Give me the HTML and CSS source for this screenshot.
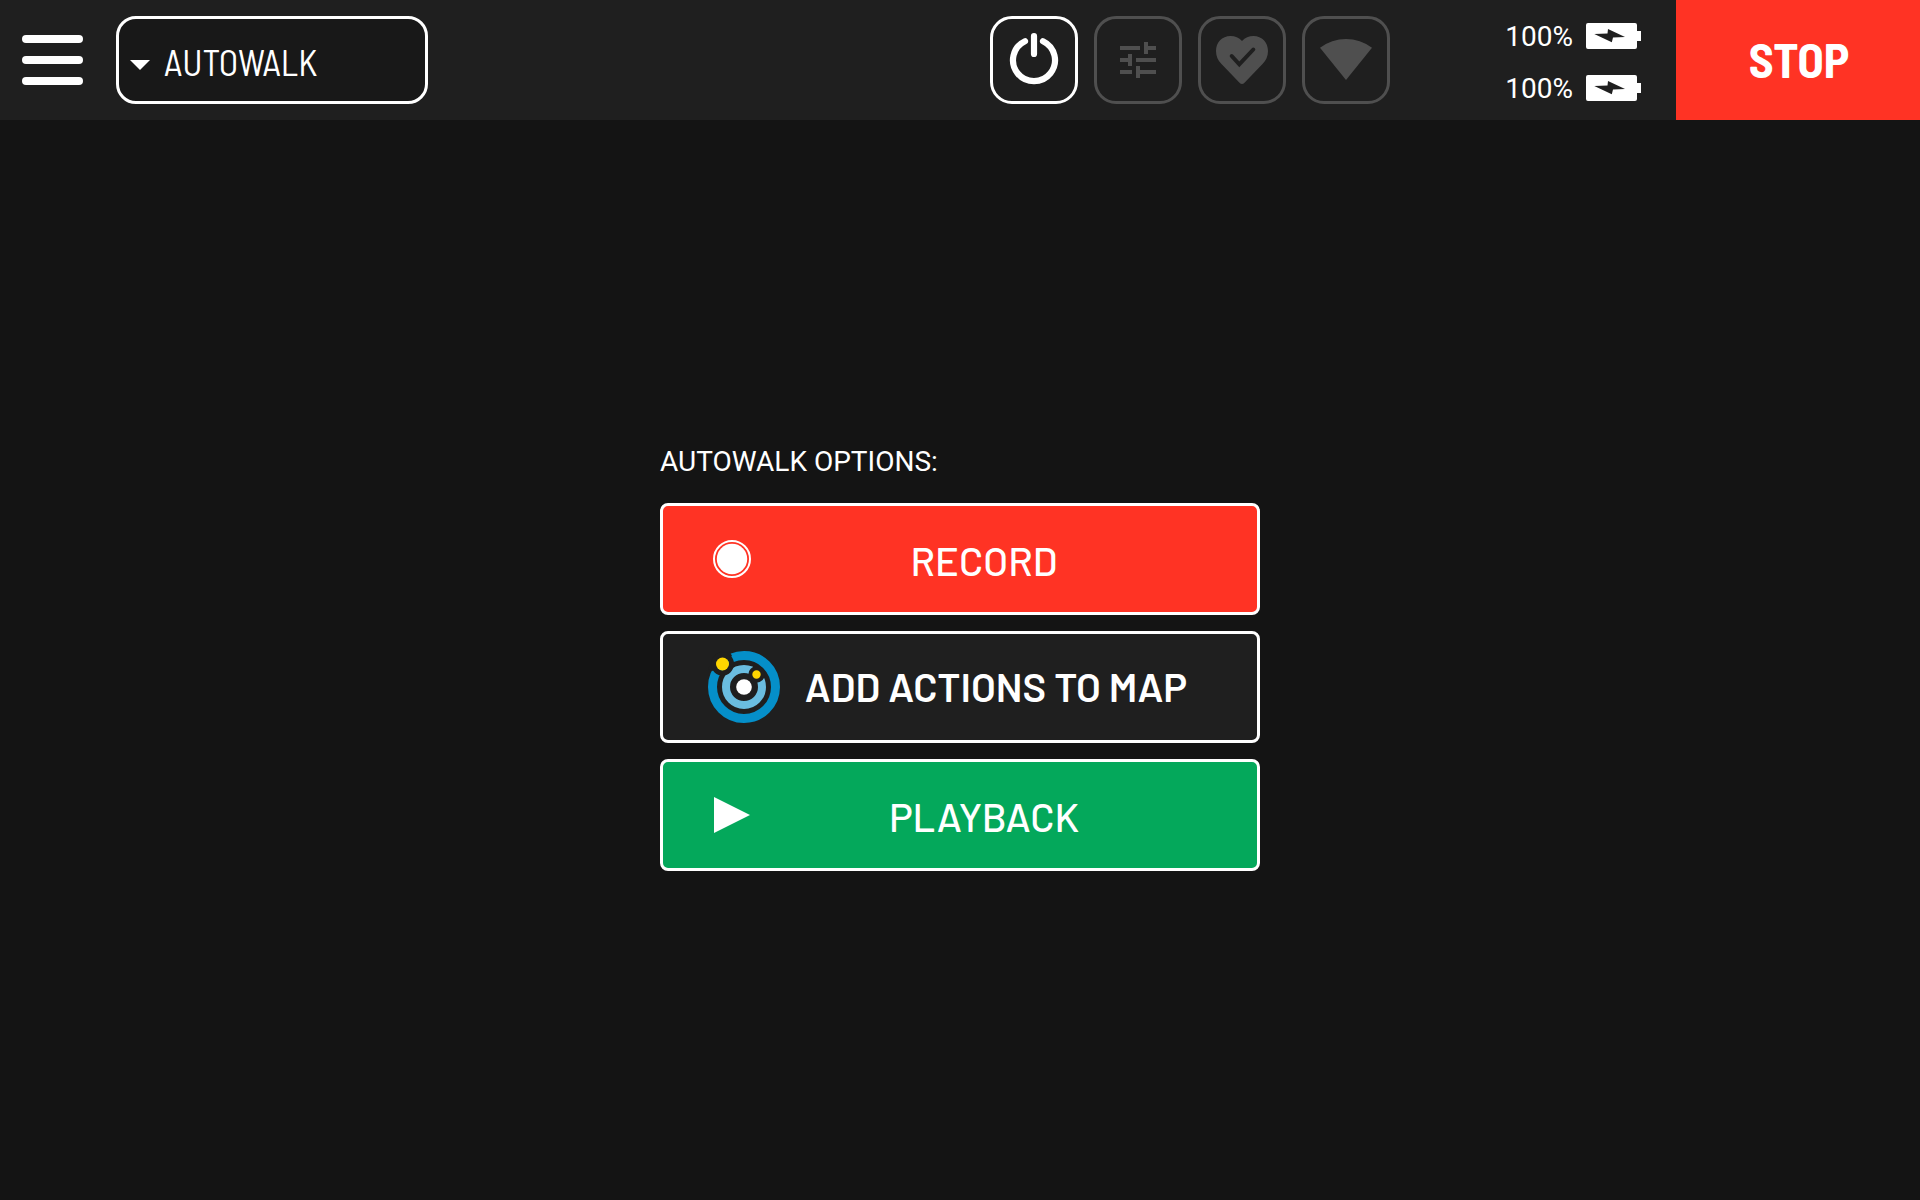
FILE: index.html
```html
<!DOCTYPE html>
<html lang="en">
<head>
<meta charset="utf-8">
<meta name="viewport" content="width=device-width, initial-scale=1">
<title>Autowalk</title>
<link rel="stylesheet" href="styles.css">
</head>
<body>
<header class="topbar">
  <button class="menu" type="button" aria-label="Menu">
    <span class="menu-line"></span>
    <span class="menu-line"></span>
    <span class="menu-line"></span>
  </button>
  <div class="mode">
    <svg class="mode-arrow" viewBox="0 0 20 10" aria-hidden="true"><path d="M0 0h20L10 10z"/></svg>
    <select class="mode-select" aria-label="Mode">
      <option>AUTOWALK</option>
    </select>
  </div>
  <nav class="tools" aria-label="Robot status">
    <button class="tool tool-active" type="button" aria-label="Power">
      <svg class="tool-icon" viewBox="0 0 64 64"><path d="M23 13.200A21 21 0 1 0 41 13.200M32 8.200V26" fill="none" stroke="currentColor" stroke-width="6.200" stroke-linecap="round"/></svg>
    </button>
    <button class="tool" type="button" aria-label="Settings">
      <svg class="tool-icon" viewBox="-4 -4 32 32"><path fill="currentColor" d="M3 17v2h6v-2H3zM3 5v2h10V5H3zm10 16v-2h8v-2h-8v-2h-2v6h2zM7 9v2H3v2h4v2h2V9H7zm14 4v-2H11v2h10zm-6-4h2V7h4V5h-4V3h-2v6z"/></svg>
    </button>
    <button class="tool" type="button" aria-label="Health">
      <svg class="tool-icon" viewBox="0 0 64 64"><path fill="currentColor" d="M32 13C29 9.500 25 8 20.500 8C12 8 6 14.500 6 23C6 28.500 8 32.500 11.500 36L29.500 54.800Q32 57.200 34.500 54.800L52.500 36C56 32.500 58 28.500 58 23C58 14.500 52 8 43.500 8C39 8 35 9.500 32 13z"/><path class="tool-cutout" d="M21.700 28l7.600 8.300L43.300 21.500"/></svg>
    </button>
    <button class="tool" type="button" aria-label="Network">
      <svg class="tool-icon" viewBox="0 0 64 64"><path fill="currentColor" d="M6 19.700A43 43 0 0 1 58 19.700L32 52z"/></svg>
    </button>
  </nav>
  <div class="batteries">
    <div class="battery">
      <span class="battery-level">100%</span>
      <svg class="battery-icon" viewBox="0 0 56 26" aria-hidden="true"><path fill="#fff" d="M2 0H49Q51 0 51 2V8H55V18H51V24Q51 26 49 26H2Q0 26 0 24V2Q0 0 2 0z"/><path fill="#1f1f1f" d="M8.300 11L21.500 10.600 22 6 39 14 27 14.400 25.800 19.200z"/></svg>
    </div>
    <div class="battery">
      <span class="battery-level">100%</span>
      <svg class="battery-icon" viewBox="0 0 56 26" aria-hidden="true"><path fill="#fff" d="M2 0H49Q51 0 51 2V8H55V18H51V24Q51 26 49 26H2Q0 26 0 24V2Q0 0 2 0z"/><path fill="#1f1f1f" d="M8.300 11L21.500 10.600 22 6 39 14 27 14.400 25.800 19.200z"/></svg>
    </div>
  </div>
  <button class="stop" type="button">STOP</button>
</header>
<main class="stage">
  <section class="options" aria-labelledby="options-title">
    <h1 class="options-title" id="options-title">AUTOWALK OPTIONS:</h1>
    <div class="options-list">
      <button class="option option-record" type="button">
        <svg class="option-icon" viewBox="0 0 48 48" aria-hidden="true"><circle cx="24" cy="24" r="18" fill="none" stroke="#fff" stroke-width="2"/><circle cx="24" cy="24" r="15.200" fill="#fff"/></svg>
        <span class="option-label">RECORD</span>
      </button>
      <button class="option option-map" type="button">
        <svg class="option-logo" viewBox="0 0 72 72" aria-hidden="true">
          <circle cx="36" cy="36" r="31.500" fill="none" stroke="#058fc9" stroke-width="9"/>
          <circle cx="36" cy="36" r="18" fill="none" stroke="#6abde0" stroke-width="8"/>
          <circle cx="36" cy="36" r="7.800" fill="#fff"/>
          <path d="M8 3L20 -3L24 5L5 20L0 18z" fill="#1f1f1f"/>
          <circle cx="14.500" cy="13" r="9" fill="none" stroke="#1f1f1f" stroke-width="5"/>
          <circle cx="14.500" cy="13" r="6.500" fill="#ffd600"/>
          <circle cx="48.500" cy="23.500" r="6.200" fill="#ffd600" stroke="#1f1f1f" stroke-width="4"/>
        </svg>
        <span class="option-label">ADD ACTIONS TO MAP</span>
      </button>
      <button class="option option-playback" type="button">
        <svg class="option-icon" viewBox="0 0 48 48" aria-hidden="true"><path fill="#fff" d="M6 6L42 24L6 42z"/></svg>
        <span class="option-label">PLAYBACK</span>
      </button>
    </div>
  </section>
</main>
</body>
</html>
```
FILE: styles.css
```css
* {
  box-sizing: border-box;
}

body {
  margin: 0;
  min-height: 100vh;
  display: flex;
  flex-direction: column;
  background: #141414;
  color: #fff;
  font-family: Roboto, "Liberation Sans", sans-serif;
  font-size: 28px;
  line-height: 32px;
}

button,
select {
  margin: 0;
  padding: 0;
  border: 0;
  background: none;
  color: inherit;
  font: inherit;
  cursor: pointer;
}

svg {
  display: block;
  flex: none;
}

.topbar {
  display: flex;
  align-items: center;
  height: 120px;
  padding-left: 22px;
  background: #1f1f1f;
}

.menu {
  display: flex;
  flex-direction: column;
  gap: 13px;
  width: 61px;
  margin-right: 33px;
}

.menu-line {
  height: 8px;
  border-radius: 4px;
  background: #fff;
}

.mode {
  display: flex;
  align-items: center;
  width: 312px;
  height: 88px;
  padding-left: 11px;
  border: 3px solid #fff;
  border-radius: 20px;
  background: #181818;
}

.mode-arrow {
  width: 20px;
  height: 10px;
  margin-top: 10px;
  fill: #fff;
}

.mode-select {
  flex: 1;
  align-self: stretch;
  padding: 4px 0 0 14px;
  appearance: none;
  outline: none;
  font-family: "Barlow Semi Condensed", "Barlow Condensed", "Roboto Condensed", Roboto, sans-serif;
  font-size: 36px;
  font-weight: 400;
}

.tools {
  display: flex;
  gap: 16px;
  margin-left: auto;
}

.tool {
  display: flex;
  align-items: center;
  justify-content: center;
  width: 88px;
  height: 88px;
  border: 3px solid currentColor;
  border-radius: 22px;
  color: #4f4f4f;
}

.tool-active {
  color: #fff;
}

.tool-icon {
  width: 64px;
  height: 64px;
}

.tool-cutout {
  fill: none;
  stroke: #1f1f1f;
  stroke-width: 4;
  stroke-linecap: round;
}

.batteries {
  display: flex;
  flex-direction: column;
  gap: 18px;
  margin: 4px 34px 0 115px;
}

.battery {
  display: flex;
  align-items: center;
  gap: 13px;
}

.battery-level {
  padding-top: 2px;
}

.battery-icon {
  width: 56px;
  height: 26px;
}

.stop {
  align-self: stretch;
  width: 244px;
  padding: 0 0 2px 2px;
  background: #ff3324;
  font-family: "Barlow Semi Condensed", "Barlow Condensed", "Roboto Condensed", Roboto, sans-serif;
  font-size: 48px;
  font-weight: 700;
}

.stage {
  flex: 1;
  display: flex;
  align-items: center;
  justify-content: center;
  padding: 0 24px 4px;
}

.options {
  width: 100%;
  max-width: 600px;
}

.options-title {
  margin: 0 0 24px;
  font-size: 28px;
  font-weight: 400;
  line-height: 34px;
}

.options-list {
  display: flex;
  flex-direction: column;
  gap: 16px;
}

.option {
  display: flex;
  align-items: center;
  width: 100%;
  height: 112px;
  padding: 0 45px;
  border: 3px solid #fff;
  border-radius: 8px;
  font-family: Barlow, Roboto, sans-serif;
  font-size: 40px;
  font-weight: 500;
  line-height: 48px;
}

.option-record {
  background: #ff3324;
}

.option-map {
  background: #1f1f1f;
  font-weight: 600;
}

.option-playback {
  background: #04a85b;
}

.option-icon {
  width: 48px;
  height: 48px;
}

.option-logo {
  width: 72px;
  height: 72px;
}

.option-label {
  flex: 1;
  padding-bottom: 2px;
  text-align: center;
  white-space: nowrap;
}

.option-record .option-label,
.option-playback .option-label {
  padding: 2px 0 0;
}
```
